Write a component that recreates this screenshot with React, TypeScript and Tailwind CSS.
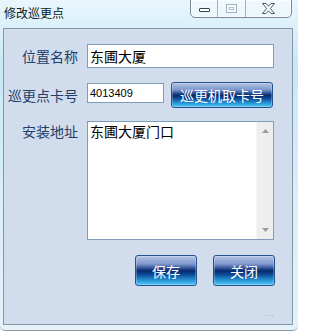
import React from "react";

const cjk = { fontFamily: '"Noto Sans CJK SC", "Liberation Sans", sans-serif' };

function BlueButton({ label, className }: { label: string; className: string }) {
  return (
    <button
      className={`flex items-center justify-center rounded-[3px] border border-[#24508e] bg-[linear-gradient(to_bottom,#b4c5e4_0%,#7d97cc_28%,#1c3f86_46%,#062a6c_52%,#0d4a96_64%,#2c9cdc_86%,#52c8f2_100%)] text-[14px] leading-none text-white shadow-[inset_0_0_0_1px_rgba(255,255,255,0.25)] ${className}`}
      style={cjk}
    >
      {label}
    </button>
  );
}

function TitleButtons() {
  return (
    <div className="flex h-[19px] -mt-px overflow-hidden rounded-b-[5px] border border-[#7b8796] bg-[rgba(255,255,255,0.35)] shadow-[inset_0_0_0_1px_rgba(255,255,255,0.6)]">
      {/* minimise */}
      <div className="flex w-[27px] items-center justify-center border-r border-[#a5afbb]">
        <div className="mt-[3px] h-[4px] w-[11px] rounded-[1px] border border-[#39424e] bg-white" />
      </div>
      {/* maximise (disabled) */}
      <div className="flex w-[28px] items-center justify-center border-r border-[#a5afbb]">
        <div className="flex h-[9px] w-[11px] items-center justify-center border border-[#a9b3be]">
          <div className="h-[3px] w-[5px] border border-[#b8c1ca]" />
        </div>
      </div>
      {/* close */}
      <div className="flex flex-1 items-center justify-center">
        <svg width="15" height="11" viewBox="0 0 15 11">
          <path
            d="M1.5 0.5h3.5l2.5 2.7 2.5-2.7h3.5l-4.2 5 4.2 5h-3.5l-2.5-2.7-2.5 2.7h-3.5l4.2-5z"
            fill="#ffffff"
            stroke="#4b5563"
            strokeWidth="1"
            strokeLinejoin="round"
          />
        </svg>
      </div>
    </div>
  );
}

export default function App() {
  return (
    <div className="h-[334px] w-[298px] bg-white">
      <div className="flex h-[331px] w-[298px] flex-col overflow-hidden rounded-b-[5px] border-b border-[#8e98a3] bg-[linear-gradient(to_bottom,#e9f6fc_0%,#c8e8f6_20%,#d9eef8_60%,#e4f1f8_100%)]">
        {/* title bar */}
        <div className="flex h-[28px] shrink-0 items-start">
          <span className="mt-[6px] ml-[4px] text-[12px] leading-[14px] text-[#101820]" style={cjk}>
            修改巡更点
          </span>
          <div className="ml-auto mr-[6px] w-[102px]">
            <TitleButtons />
          </div>
        </div>

        {/* client panel */}
        <div className="mx-[3px] mr-[5px] h-[297px] border border-[#8596ab] bg-[#d1ddec] px-px pt-[15px] pr-[17px]">
          {/* row 1 */}
          <div className="flex h-[24px] items-center">
            <span className="w-[73px] text-right text-[14px] leading-none text-[#223f6b]" style={cjk}>
              位置名称
            </span>
            <div className="ml-[9px] flex h-[24px] w-[187px] items-center border border-[#7f9db9] bg-white pl-[2px]">
              <span className="text-[14px] leading-none text-black" style={cjk}>
                东圃大厦
              </span>
            </div>
          </div>

          {/* row 2 */}
          <div className="mt-[14px] flex h-[26px] items-center">
            <span className="w-[73px] text-right text-[14px] leading-none text-[#223f6b]" style={cjk}>
              巡更点卡号
            </span>
            <div className="ml-[9px] -mt-[4px] flex h-[20px] w-[77px] items-center border border-[#7f9db9] bg-white pl-[2px]">
              <span className="text-[11px] leading-none text-black" style={{ fontFamily: '"Liberation Sans", sans-serif' }}>
                4013409
              </span>
            </div>
            <BlueButton label="巡更机取卡号" className="ml-[7px] h-[26px] w-[102px]" />
          </div>

          {/* row 3 */}
          <div className="mt-[13px] flex items-start">
            <span className="mt-[3px] w-[73px] text-right text-[14px] leading-none text-[#223f6b]" style={cjk}>
              安装地址
            </span>
            <div className="ml-[9px] flex h-[119px] w-[187px] border border-[#7f9db9] bg-white">
              <div className="flex-1 pl-[2px] pt-[2px] text-[14px] leading-none text-black" style={cjk}>
                东圃大厦门口
              </div>
              <div className="flex w-[17px] flex-col items-center justify-between border-l border-[#f7f7f7] bg-[#eeeeee] py-[7px]">
                <svg width="7" height="4" viewBox="0 0 7 4">
                  <path d="M0 4L3.5 0L7 4z" fill="#9a9a9a" />
                </svg>
                <svg width="7" height="4" viewBox="0 0 7 4">
                  <path d="M0 0L3.5 4L7 0z" fill="#9a9a9a" />
                </svg>
              </div>
            </div>
          </div>

          {/* action buttons */}
          <div className="mt-[15px] flex justify-end gap-[16px]">
            <BlueButton label="保存" className="h-[31px] w-[62px]" />
            <BlueButton label="关闭" className="h-[31px] w-[62px]" />
          </div>

          <div className="mt-[26px] flex justify-end pr-0 text-[8px] leading-none tracking-[1px] text-[#a8b2be]">
            ···
          </div>
        </div>
      </div>
    </div>
  );
}
